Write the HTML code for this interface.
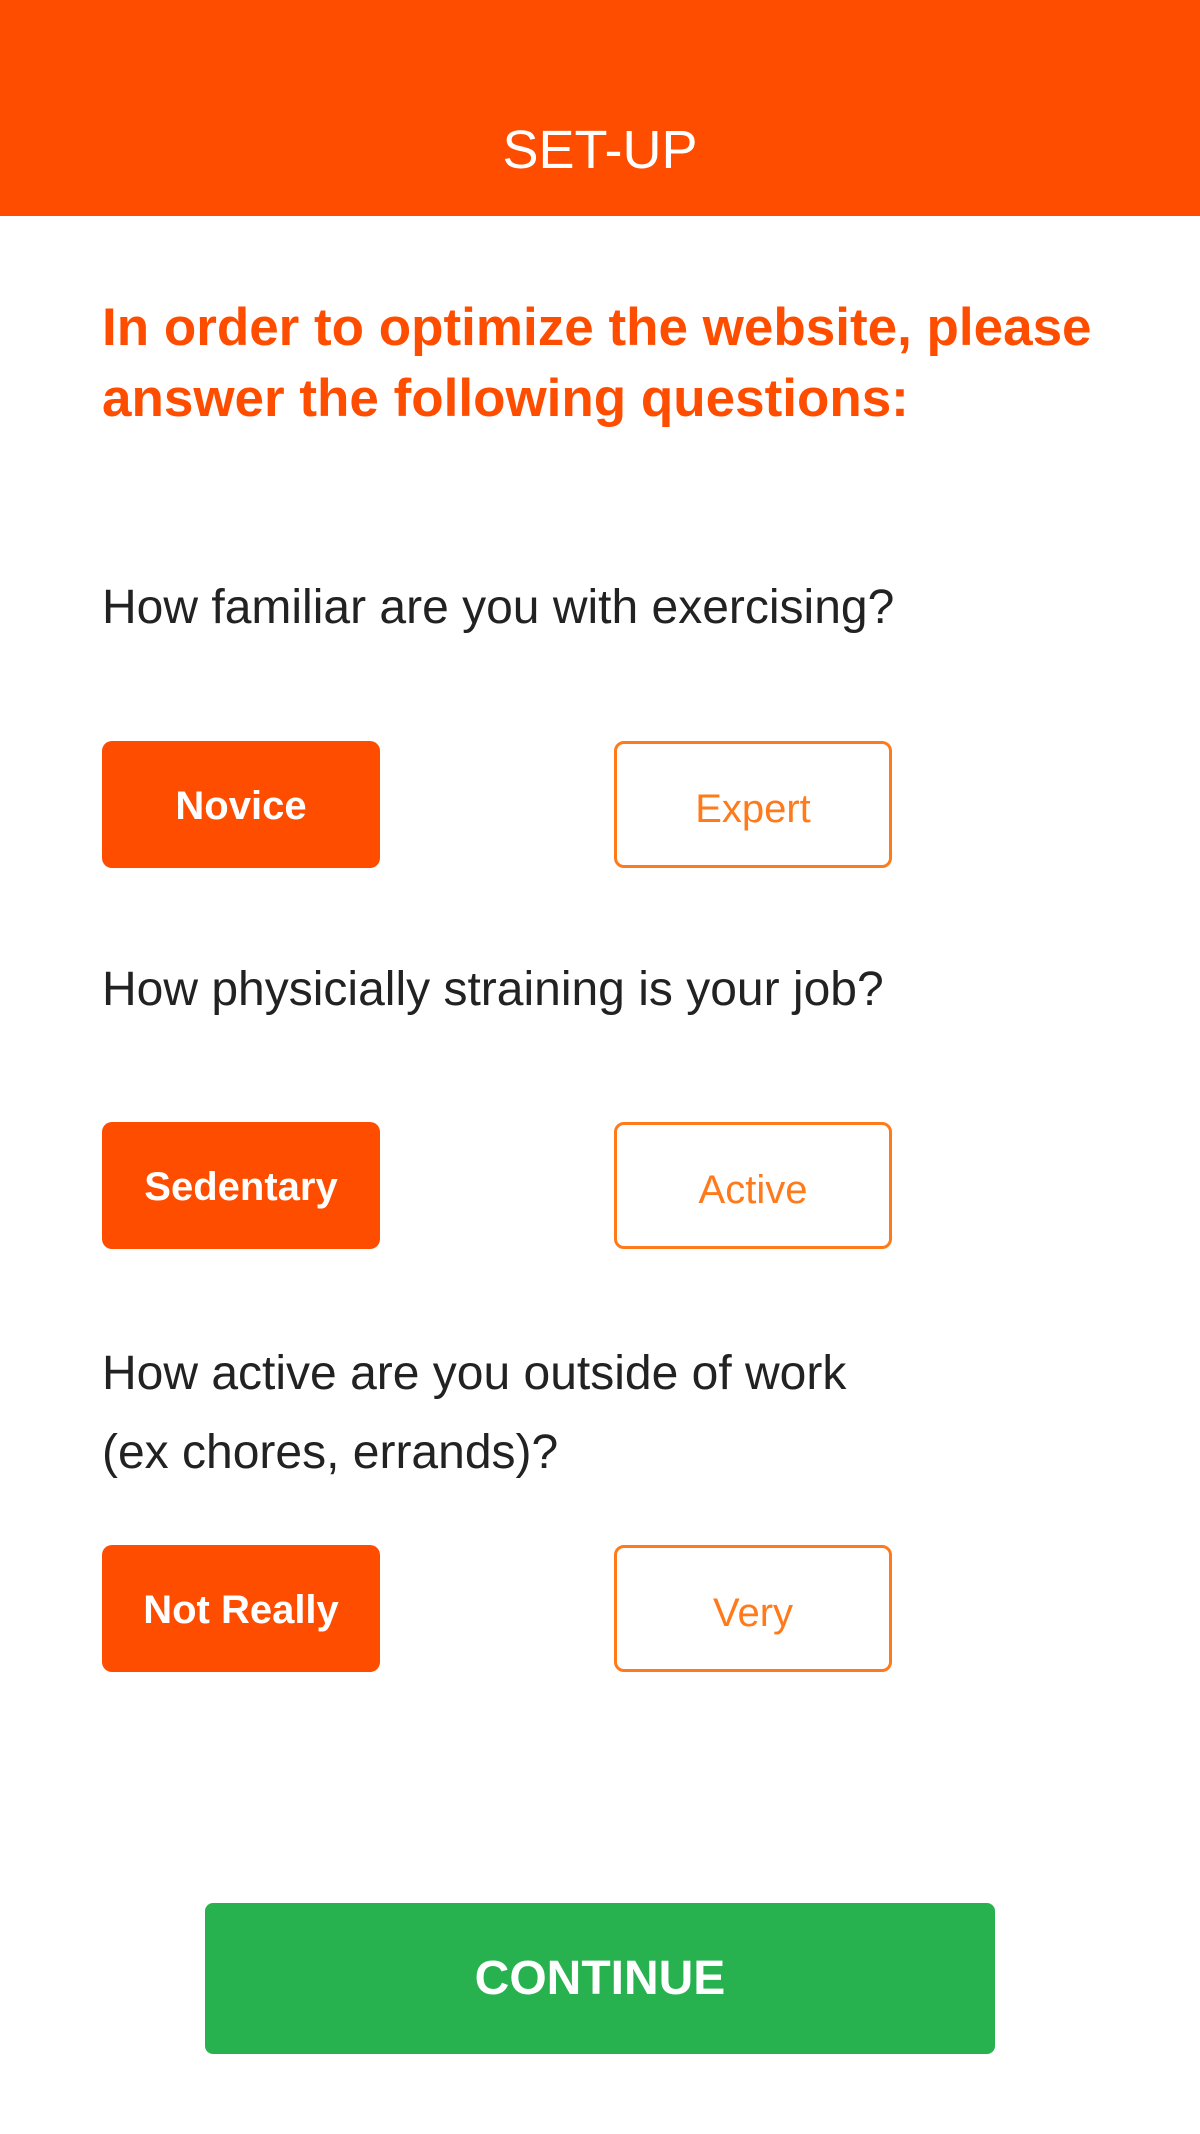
<!DOCTYPE html>
<html><head><style>
body{margin:0;width:1200px;height:2134px;background:#fff;font-family:"Liberation Sans",sans-serif;position:relative;overflow:hidden}
.hd{position:absolute;left:0;top:0;width:1200px;height:216px;background:#ff4d00;color:#fff;font-size:54px;text-align:center;line-height:300px}
.h2{position:absolute;left:102px;top:292px;width:1050px;color:#ff4d00;font-weight:bold;font-size:53px;line-height:71px}
.q{position:absolute;left:102px;color:#222;font-size:48px;line-height:79px}
.b{position:absolute;width:278px;height:127px;box-sizing:border-box;border-radius:10px;text-align:center;line-height:131px;font-size:40px}
.f{left:102px;background:#ff4d00;color:#fff;font-weight:bold}
.o{left:614px;border:3px solid #ff7a1a;color:#ff7a1a}
.c{position:absolute;left:205px;top:1903px;width:790px;height:151px;background:#27b24f;border-radius:8px;color:#fff;font-weight:bold;font-size:48px;text-align:center;line-height:151px}
</style></head><body>
<div class="hd">SET-UP</div>
<div class="h2">In order to optimize the website, please<br>answer the following questions:</div>
<div class="q" style="top:568px">How familiar are you with exercising?</div>
<div class="b f" style="top:741px">Novice</div><div class="b o" style="top:741px">Expert</div>
<div class="q" style="top:950px">How physicially straining is your job?</div>
<div class="b f" style="top:1122px">Sedentary</div><div class="b o" style="top:1122px">Active</div>
<div class="q" style="top:1334px">How active are you outside of work<br>(ex chores, errands)?</div>
<div class="b f" style="top:1545px">Not Really</div><div class="b o" style="top:1545px">Very</div>
<div class="c">CONTINUE</div>
</body></html>
